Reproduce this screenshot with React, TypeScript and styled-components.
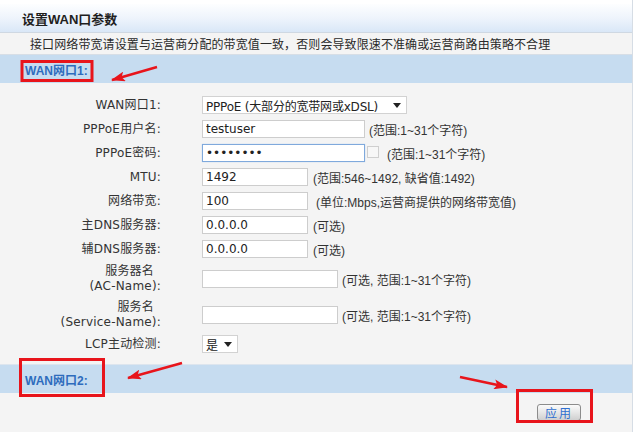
import React from "react";
import styled, { createGlobalStyle } from "styled-components";

const GlobalStyle = createGlobalStyle`
  html, body {
    margin: 0;
    padding: 0;
    background: #ffffff;
  }
  body {
    font-family: "DejaVu Sans", "Noto Sans CJK SC", sans-serif;
    font-size: 12px;
    color: #333333;
  }
`;

type FieldRow = {
  label: React.ReactNode;
  tall?: boolean;
  field: React.ReactNode;
};

function Caret() {
  return (
    <svg width="8" height="5" viewBox="0 0 8 5">
      <path d="M0 0 L8 0 L4 5 Z" fill="#222" />
    </svg>
  );
}

function Annotations() {
  return (
    <Overlay viewBox="0 0 640 432">
      <defs>
        <marker
          id="arrow-head"
          markerUnits="userSpaceOnUse"
          markerWidth="14"
          markerHeight="10"
          refX="13"
          refY="5"
          orient="auto"
        >
          <path d="M0 0 L14 5 L0 10 L3 5 Z" fill="#e8141b" />
        </marker>
      </defs>
      <g fill="none" stroke="#e8141b" strokeWidth="3">
        <rect x="22" y="61.5" width="70" height="19" />
        <rect x="20.5" y="359.5" width="83" height="36" />
        <rect x="517.5" y="390.5" width="74" height="31" />
      </g>
      <g stroke="#e8141b" strokeWidth="2.5" markerEnd="url(#arrow-head)">
        <line x1="157" y1="67" x2="112" y2="80" />
        <line x1="182" y1="363" x2="128" y2="378" />
        <line x1="460" y1="377" x2="507" y2="387" />
      </g>
    </Overlay>
  );
}

function App() {
  const rows: FieldRow[] = [
    {
      label: "WAN网口1:",
      field: (
        <SelectBox $width={205}>
          <span>PPPoE (大部分的宽带网或xDSL)</span>
          <Caret />
        </SelectBox>
      ),
    },
    {
      label: "PPPoE用户名:",
      field: (
        <>
          <TextInput $width={163} defaultValue="testuser" readOnly />
          <Hint>(范围:1~31个字符)</Hint>
        </>
      ),
    },
    {
      label: "PPPoE密码:",
      field: (
        <>
          <TextInput $width={163} $focused type="password" defaultValue="testpass" readOnly />
          <CheckBox />
          <Hint $offset={4}>(范围:1~31个字符)</Hint>
        </>
      ),
    },
    {
      label: "MTU:",
      field: (
        <>
          <TextInput $width={106} defaultValue="1492" readOnly />
          <Hint $offset={1}>(范围:546~1492, 缺省值:1492)</Hint>
        </>
      ),
    },
    {
      label: "网络带宽:",
      field: (
        <>
          <TextInput $width={106} defaultValue="100" readOnly />
          <Hint $offset={4}>(单位:Mbps,运营商提供的网络带宽值)</Hint>
        </>
      ),
    },
    {
      label: "主DNS服务器:",
      field: (
        <>
          <TextInput $width={106} defaultValue="0.0.0.0" readOnly />
          <Hint $offset={1}>(可选)</Hint>
        </>
      ),
    },
    {
      label: "辅DNS服务器:",
      field: (
        <>
          <TextInput $width={106} defaultValue="0.0.0.0" readOnly />
          <Hint $offset={1}>(可选)</Hint>
        </>
      ),
    },
    {
      label: (
        <>
          <FirstLine>服务器名</FirstLine>
          (AC-Name):
        </>
      ),
      tall: true,
      field: (
        <>
          <TextInput $width={136} defaultValue="" readOnly />
          <Hint>(可选, 范围:1~31个字符)</Hint>
        </>
      ),
    },
    {
      label: (
        <>
          <FirstLine>服务名</FirstLine>
          (Service-Name):
        </>
      ),
      tall: true,
      field: (
        <>
          <TextInput $width={136} defaultValue="" readOnly />
          <Hint>(可选, 范围:1~31个字符)</Hint>
        </>
      ),
    },
    {
      label: "LCP主动检测:",
      field: (
        <SelectBox $width={36}>
          <span>是</span>
          <Caret />
        </SelectBox>
      ),
    },
  ];

  return (
    <Page>
      <GlobalStyle />
      <Panel>
        <TitleBar>设置WAN口参数</TitleBar>
        <Notice>接口网络带宽请设置与运营商分配的带宽值一致，否则会导致限速不准确或运营商路由策略不合理</Notice>
        <SectionBar>WAN网口1:</SectionBar>
        <Form>
          {rows.map((row, i) => (
            <Row key={i} $tall={row.tall} $last={i === rows.length - 1}>
              <Label>{row.label}</Label>
              <Field>{row.field}</Field>
            </Row>
          ))}
        </Form>
        <SectionBar $divided>WAN网口2:</SectionBar>
        <Footer>
          <ApplyButton>应用</ApplyButton>
        </Footer>
      </Panel>
      <Annotations />
    </Page>
  );
}

const Page = styled.div`
  position: relative;
  width: 640px;
  height: 432px;
  overflow: hidden;
  background: #ffffff;
`;

const Panel = styled.div`
  display: flex;
  flex-direction: column;
  width: 633px;
  height: 432px;
  padding-top: 4px;
  box-sizing: border-box;
  border-right: 1px solid #d6dde5;
`;

const TitleBar = styled.div`
  display: flex;
  align-items: center;
  height: 28px;
  padding-left: 22px;
  background: linear-gradient(to bottom, #fdfeff 0%, #eef4fc 50%, #d9e7f7 100%);
  border-bottom: 1px solid #cfd8e2;
  font-family: "Liberation Sans", "Noto Sans CJK SC", sans-serif;
  font-size: 13px;
  font-weight: 700;
  color: #1f1f1f;
`;

const Notice = styled.div`
  display: flex;
  align-items: center;
  height: 21px;
  padding-left: 30px;
  background: #f4f4f4;
  border-bottom: 1px solid #d7dee6;
  font-size: 12px;
  letter-spacing: 0.1px;
  color: #2a2a2a;
  white-space: nowrap;
`;

const SectionBar = styled.div<{ $divided?: boolean }>`
  display: flex;
  align-items: center;
  height: 28px;
  padding-left: 25px;
  background: #c6dcf0;
  border-top: ${({ $divided }) => ($divided ? "1px solid #dde5ee" : "none")};
  font-family: "Liberation Sans", "Noto Sans CJK SC", sans-serif;
  font-size: 12px;
  font-weight: 700;
  color: #2e6cbd;
`;

const Form = styled.div`
  display: flex;
  flex-direction: column;
  padding: 10px 0 9px;
  background: #f4f4f4;
`;

const Row = styled.div<{ $tall?: boolean; $last?: boolean }>`
  display: grid;
  grid-template-columns: 161px auto;
  column-gap: 41px;
  align-items: center;
  height: ${({ $tall, $last }) => ($tall ? 36 : $last ? 22 : 24)}px;
`;

const Label = styled.div`
  display: flex;
  flex-direction: column;
  align-items: flex-end;
  line-height: 15px;
  letter-spacing: 0.2px;
  color: #333333;
  white-space: nowrap;
`;

const FirstLine = styled.span`
  padding-right: 7px;
`;

const Field = styled.div`
  display: flex;
  align-items: center;
  gap: 4px;
`;

const TextInput = styled.input<{ $width: number; $focused?: boolean }>`
  width: ${({ $width }) => $width}px;
  height: 18px;
  box-sizing: border-box;
  margin: 0;
  padding: 0 3px;
  border: 1px solid ${({ $focused }) => ($focused ? "#7fa9dc" : "#cdcdcd")};
  box-shadow: ${({ $focused }) => ($focused ? "0 0 1px #a9c7ec" : "none")};
  background: #ffffff;
  font-family: "DejaVu Sans", sans-serif;
  font-size: 12px;
  color: #222222;
  outline: none;
`;

const SelectBox = styled.div<{ $width: number }>`
  display: flex;
  align-items: center;
  justify-content: space-between;
  width: ${({ $width }) => $width}px;
  height: 18px;
  box-sizing: border-box;
  padding: 0 5px 0 3px;
  border: 1px solid #d2d2d2;
  background: #ffffff;
  font-size: 12px;
  letter-spacing: -0.2px;
  color: #222222;
  white-space: nowrap;
`;

const CheckBox = styled.span`
  display: block;
  width: 12px;
  height: 12px;
  margin: -3px 0 0 -2px;
  box-sizing: border-box;
  border: 1px solid #cfcfcf;
  background: #f7f7f7;
`;

const Hint = styled.span<{ $offset?: number }>`
  margin-left: ${({ $offset }) => $offset ?? 0}px;
  font-family: "Liberation Sans", "Noto Sans CJK SC", sans-serif;
  font-size: 12px;
  color: #333333;
  white-space: nowrap;
`;

const Footer = styled.div`
  display: flex;
  flex: 1;
  align-items: center;
  justify-content: flex-end;
  padding-right: 51px;
  background: #f4f4f4;
`;

const ApplyButton = styled.button`
  width: 44px;
  height: 17px;
  padding: 0;
  border: 1px solid #8c8c8c;
  border-radius: 3px;
  background: linear-gradient(to bottom, #fbfbfb 0%, #e6e6e6 50%, #cfcfcf 100%);
  font-family: "Noto Sans CJK SC", sans-serif;
  font-size: 12px;
  line-height: 15px;
  letter-spacing: 2px;
  color: #2f6fd0;
  cursor: pointer;
`;

const Overlay = styled.svg`
  position: absolute;
  inset: 0;
  width: 640px;
  height: 432px;
  pointer-events: none;
`;

export default App;
